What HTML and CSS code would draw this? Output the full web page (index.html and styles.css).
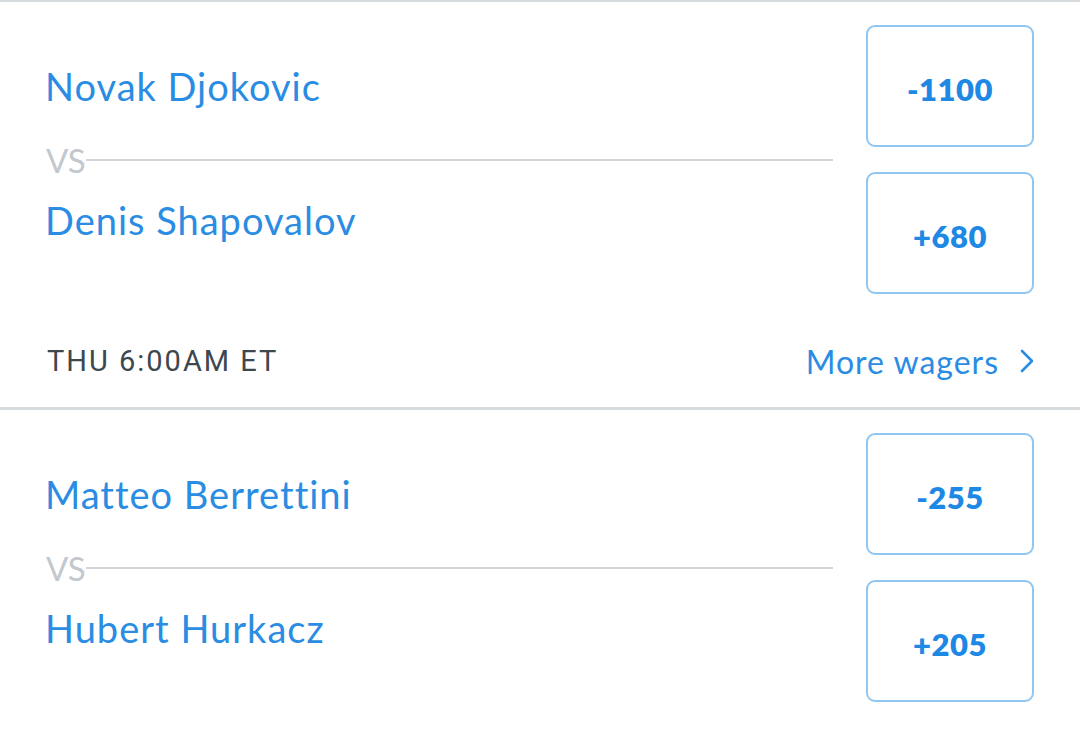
FILE: index.html
```html
<!DOCTYPE html>
<html>
<head>
<meta charset="utf-8">
<link rel="stylesheet" href="styles.css">
</head>
<body>
<div class="list">
  <section class="match">
    <div class="main">
      <div class="teams">
        <div class="team">Novak Djokovic</div>
        <div class="vs"><span class="vs-label">VS</span><span class="vs-line"></span></div>
        <div class="team team-2">Denis Shapovalov</div>
      </div>
      <div class="odds">
        <button class="odd">-1100</button>
        <button class="odd">+680</button>
      </div>
    </div>
    <div class="footer">
      <span class="time">THU 6:00AM ET</span>
      <a class="more">More wagers
        <svg class="chev" viewBox="0 0 14 24" width="14" height="24"><path d="M2 2 L12 12 L2 22" fill="none" stroke="#2a8ce2" stroke-width="2.6" stroke-linecap="round" stroke-linejoin="round"/></svg>
      </a>
    </div>
  </section>
  <section class="match">
    <div class="main">
      <div class="teams">
        <div class="team">Matteo Berrettini</div>
        <div class="vs"><span class="vs-label">VS</span><span class="vs-line"></span></div>
        <div class="team team-2">Hubert Hurkacz</div>
      </div>
      <div class="odds">
        <button class="odd">-255</button>
        <button class="odd">+205</button>
      </div>
    </div>
  </section>
</div>
</body>
</html>
```
FILE: styles.css
```css
html, body {
  margin: 0;
  padding: 0;
  background: #ffffff;
}
body {
  font-family: "Lato", "Liberation Sans", sans-serif;
  width: 1080px;
  height: 743px;
  overflow: hidden;
}
.match {
  border-top: 3px solid #d6dbde;
  margin-top: -1px;
}
.main {
  display: flex;
  padding: 23px 46px 0 46px;
}
.teams {
  flex: 1;
  display: flex;
  flex-direction: column;
  padding-top: 39px;
  margin-right: 33px;
}
.team {
  font-size: 38px;
  letter-spacing: 1px;
  line-height: 44px;
  height: 44px;
  color: #2a8ce2;
  white-space: nowrap;
  margin-left: -1px;
}
.vs {
  display: flex;
  align-items: center;
  height: 32px;
  margin-top: 36px;
}
.vs-label {
  font-size: 33px;
  line-height: 32px;
  color: #c2c8cd;
}
.vs-line {
  flex: 1;
  height: 2px;
  background: #d2d6da;
}
.team-2 {
  margin-top: 22px;
}
.odds {
  display: flex;
  flex-direction: column;
  gap: 25px;
}
.odd {
  width: 168px;
  height: 122px;
  box-sizing: border-box;
  border: 2px solid #90c6ef;
  border-radius: 9px;
  background: #fff;
  font-family: "Lato", "Liberation Sans", sans-serif;
  font-weight: 800;
  font-size: 31px;
  letter-spacing: 0.5px;
  color: #1e88e5;
  padding: 6px 0 0 0;
}
.footer {
  display: flex;
  justify-content: space-between;
  align-items: center;
  box-sizing: border-box;
  padding: 20px 46px 0 47px;
  height: 114px;
}
.time {
  font-family: "Roboto", "Liberation Sans", sans-serif;
  font-size: 29px;
  letter-spacing: 2px;
  color: #3d474e;
}
.more {
  display: flex;
  align-items: center;
  font-size: 32px;
  letter-spacing: 1px;
  color: #2a8ce2;
}
.chev {
  margin-left: 21px;
}
```
